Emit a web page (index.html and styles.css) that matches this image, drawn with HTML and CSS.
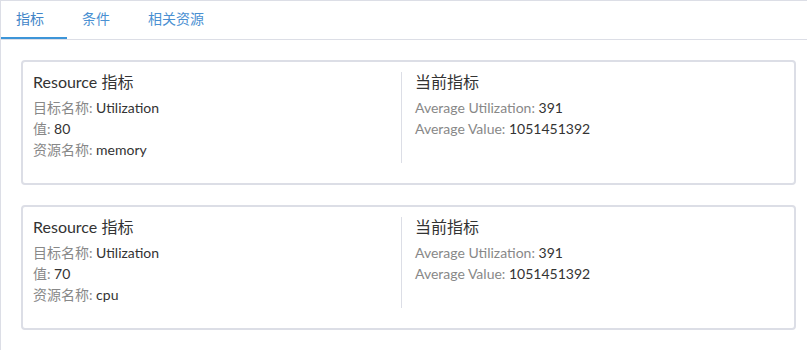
FILE: index.html
```html
<!DOCTYPE html>
<html lang="zh">
<head>
<meta charset="utf-8">
<title>指标</title>
<link rel="stylesheet" href="styles.css">
</head>
<body>
<div class="panel">
  <div class="tabs">
    <div class="tab active">指标</div>
    <div class="tab">条件</div>
    <div class="tab">相关资源</div>
  </div>
  <div class="content">
    <div class="card">
      <div class="col">
        <div class="title">Resource 指标</div>
        <div class="line"><span class="label">目标名称:</span> <span class="value">Utilization</span></div>
        <div class="line"><span class="label">值:</span> <span class="value">80</span></div>
        <div class="line"><span class="label">资源名称:</span> <span class="value">memory</span></div>
      </div>
      <div class="col right">
        <div class="title">当前指标</div>
        <div class="line"><span class="label">Average Utilization:</span> <span class="value">391</span></div>
        <div class="line"><span class="label">Average Value:</span> <span class="value">1051451392</span></div>
      </div>
    </div>
    <div class="card">
      <div class="col">
        <div class="title">Resource 指标</div>
        <div class="line"><span class="label">目标名称:</span> <span class="value">Utilization</span></div>
        <div class="line"><span class="label">值:</span> <span class="value">70</span></div>
        <div class="line"><span class="label">资源名称:</span> <span class="value">cpu</span></div>
      </div>
      <div class="col right">
        <div class="title">当前指标</div>
        <div class="line"><span class="label">Average Utilization:</span> <span class="value">391</span></div>
        <div class="line"><span class="label">Average Value:</span> <span class="value">1051451392</span></div>
      </div>
    </div>
  </div>
</div>
</body>
</html>
```

FILE: styles.css
```css
html, body {
  margin: 0;
  padding: 0;
  background: #fff;
}
body {
  font-family: Lato, "Noto Sans CJK SC", sans-serif;
  color: #333;
}
.panel {
  border-left: 1px solid #dcdee6;
  border-top: 1px solid #dcdee6;
  min-height: 349px;
}
.tabs {
  display: flex;
  border-bottom: 1px solid #dcdee6;
  height: 38px;
}
.tab {
  padding: 0 23px 0 15px;
  line-height: 36px;
  font-size: 14px;
  color: #4a90d2;
  border-bottom: 2px solid transparent;
}
.tab.active {
  border-bottom-color: #3d95d8;
  color: #4285c8;
}
.content {
  padding: 20px 0 0 20px;
  width: 775px;
  display: flex;
  flex-direction: column;
  gap: 20px;
}
.card {
  border: 2px solid #dcdee6;
  border-radius: 4px;
  padding: 10px 10px 20px 10px;
  display: grid;
  grid-template-columns: 368px 1fr;
}
.col {
  padding-bottom: 3px;
}
.col.right {
  border-left: 1px solid #dcdee6;
  padding-left: 13px;
}
.title {
  font-size: 16px;
  line-height: 20px;
  margin-bottom: 5px;
  color: #333;
}
.line {
  font-size: 14px;
  line-height: 21px;
}
.label {
  color: #888;
}
.value {
  color: #333;
}
```
